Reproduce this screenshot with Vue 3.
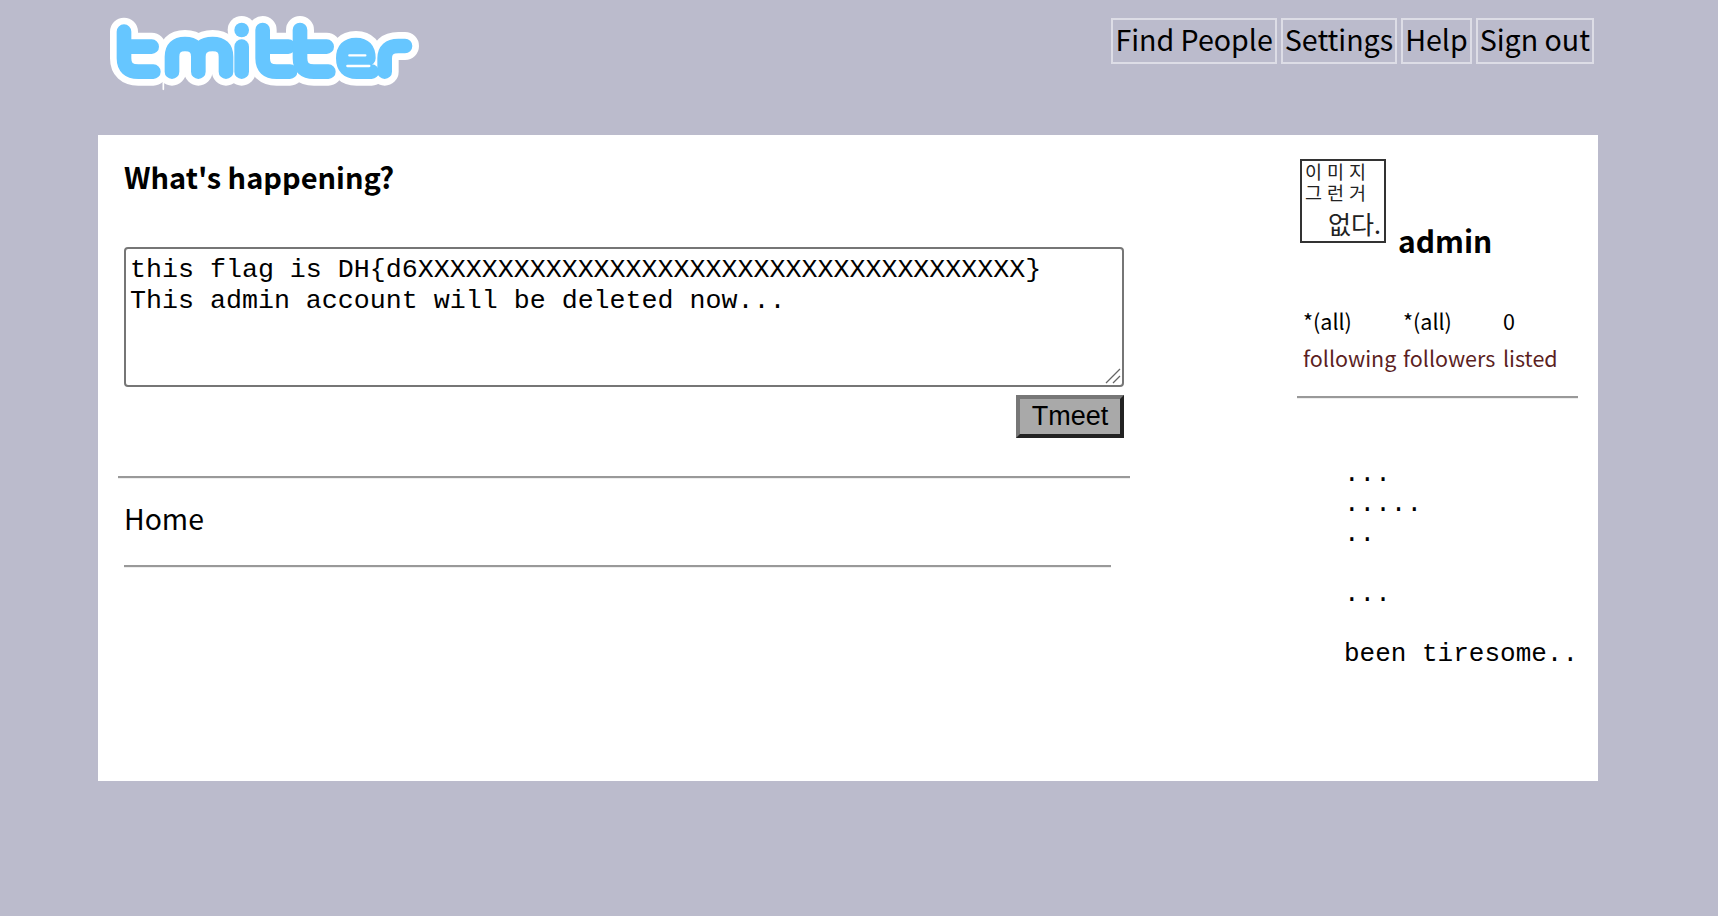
<template>
  <div class="page">
    <header class="top-bar">
      <svg class="logo" viewBox="0 0 1080 300" width="360" height="100" aria-label="logo">
        <g fill="none" stroke-linecap="round" stroke-linejoin="round">
          <g class="logo-edge">
            <path v-for="d in logoPaths" :key="d" :d="d" />
          </g>
          <path class="logo-tail" d="M220 240 V268" />
          <g class="logo-fill">
            <path v-for="d in logoPaths" :key="d" :d="d" />
          </g>
          <path class="logo-slit" d="M778 166 H826 M772 198 H838" />
        </g>
      </svg>
      <nav class="top-nav">
        <a v-for="link in links" :key="link" class="nav-link">{{ link }}</a>
      </nav>
    </header>

    <main class="card">
      <section class="content">
        <h2 class="prompt">What's happening?</h2>
        <div class="status-wrap">
          <textarea class="status-box" :value="statusText"></textarea>
          <svg class="grip" viewBox="0 0 16 16" width="16" height="16">
            <path d="M1 15 L15 1 M8 15 L15 8" />
          </svg>
        </div>
        <div class="submit-row">
          <button class="submit-btn">Tmeet</button>
        </div>
        <hr class="rule-wide" />
        <h3 class="home-title">Home</h3>
        <hr class="rule-home" />
      </section>

      <aside class="side">
        <div class="profile">
          <div class="avatar">
            <span class="avatar-small">이미지<br />그런거</span>
            <span class="avatar-big">없다.</span>
          </div>
          <strong class="user-name">admin</strong>
        </div>
        <div class="stats">
          <div v-for="stat in stats" :key="stat.label" class="stat">
            <span class="stat-value">{{ stat.value }}</span>
            <span class="stat-label">{{ stat.label }}</span>
          </div>
        </div>
        <hr class="rule-side" />
        <pre class="side-note">...
.....
..

...

been tiresome..</pre>
      </aside>
    </main>
  </div>
</template>

<script setup>
const links = ['Find People', 'Settings', 'Help', 'Sign out'];

const stats = [
  { value: '*(all)', label: 'following' },
  { value: '*(all)', label: 'followers' },
  { value: '0', label: 'listed' },
];

const statusText = 'this flag is DH{d6XXXXXXXXXXXXXXXXXXXXXXXXXXXXXXXXXXXXXX}\nThis admin account will be deleted now...';

const logoPaths = [
  'M102 95 V175 Q102 215 145 215 H190 M102 140 H185',
  'M246 215 V170 Q246 132 285 132 Q325 132 325 170 V215 M325 170 Q325 132 368 132 Q408 132 408 170 V215',
  'M455 90 V90',
  'M455 140 V215',
  'M518 90 V175 Q518 215 560 215 H600 M518 140 H595',
  'M630 90 V175 Q630 215 672 215 H715 M630 140 H710',
  'M765 175 H835 Q835 135 798 135 Q760 135 760 175 Q760 215 800 215 H845',
  'M884 215 V175 Q884 138 925 138 H945',
];
</script>

<style>
body {
  margin: 0;
  background: #bbbbcc;
}
</style>

<style scoped>
.page {
  height: 916px;
  overflow: hidden;
  font-family: 'Noto Sans CJK KR', 'Noto Sans', sans-serif;
  color: #000;
}

.top-bar {
  display: flex;
  justify-content: space-between;
  align-items: flex-start;
  height: 135px;
  padding-left: 90px;
  padding-right: 124px;
  box-sizing: border-box;
}

.logo {
  display: block;
}

.logo-edge {
  stroke: #fff;
  stroke-width: 84;
}

.logo-tail {
  stroke: #fff;
  stroke-width: 5;
}

.logo-fill {
  stroke: #66c6ff;
  stroke-width: 44;
}

.logo-slit {
  stroke: #fff;
  stroke-width: 7;
}

.top-nav {
  display: flex;
  gap: 4px;
  margin-top: 18px;
}

.nav-link {
  border: 2px solid #dddde6;
  padding: 0 2px 5px;
  font-size: 28.6px;
  line-height: 37px;
}

.card {
  display: flex;
  width: 1500px;
  height: 646px;
  margin-left: 98px;
  background: #fff;
}

.content {
  flex: none;
  width: 1199px;
  padding-left: 26px;
  box-sizing: border-box;
}

.prompt {
  margin: 21px 0 51px;
  font-size: 29px;
  line-height: 40px;
  font-weight: 700;
}

.status-wrap {
  position: relative;
  width: 1000px;
}

.status-box {
  display: block;
  width: 1000px;
  height: 140px;
  box-sizing: border-box;
  padding: 6px 4px 4px;
  border: 2px solid #767676;
  border-radius: 4px;
  resize: none;
  font-family: 'Liberation Mono', monospace;
  font-size: 26.65px;
  line-height: 30.6px;
  color: #000;
}

.grip {
  position: absolute;
  right: 3px;
  bottom: 3px;
  fill: none;
  stroke: #666;
  stroke-width: 1.3;
}

.submit-row {
  display: flex;
  justify-content: flex-end;
  width: 1000px;
  margin-top: 8px;
}

.submit-btn {
  width: 108px;
  height: 43px;
  padding: 0;
  border: 4px solid;
  border-color: #777 #222 #222 #777;
  background: #a9a9a9;
  font-family: 'Liberation Sans', sans-serif;
  font-size: 27px;
  color: #000;
}

hr {
  margin: 0;
  border: 0;
  border-top: 2px solid #999;
  border-bottom: 1px solid #eee;
}

.rule-wide {
  width: 1012px;
  margin: 38px 0 0 -6px;
}

.home-title {
  margin: 18px 0 27px;
  font-size: 28.4px;
  line-height: 41px;
  font-weight: 400;
}

.rule-home {
  width: 987px;
}

.side {
  flex: 1;
  min-width: 0;
}

.profile {
  display: flex;
  align-items: flex-end;
  gap: 12px;
  margin: 24px 0 0 3px;
}

.avatar {
  display: flex;
  flex-direction: column;
  width: 86px;
  height: 84px;
  box-sizing: border-box;
  border: 2px solid #333;
  padding: 0 3px;
  color: #222;
  white-space: nowrap;
}

.avatar-small {
  font-size: 18.5px;
  line-height: 21px;
  letter-spacing: 5px;
}

.avatar-big {
  align-self: flex-end;
  margin-top: 4px;
  font-size: 25px;
  line-height: 32px;
}

.user-name {
  margin-bottom: -17px;
  font-size: 30px;
  line-height: 40px;
}

.stats {
  display: flex;
  margin: 59px 0 0 6px;
}

.stat {
  flex: none;
  display: flex;
  flex-direction: column;
  width: 100px;
  font-size: 21.5px;
  line-height: 37px;
}

.stat-label {
  color: #5c1f1f;
}

.rule-side {
  width: 281px;
  margin-top: 20px;
}

.side-note {
  margin: 60px 0 0 47px;
  font-family: 'Liberation Mono', monospace;
  font-size: 26px;
  line-height: 30px;
}
</style>
